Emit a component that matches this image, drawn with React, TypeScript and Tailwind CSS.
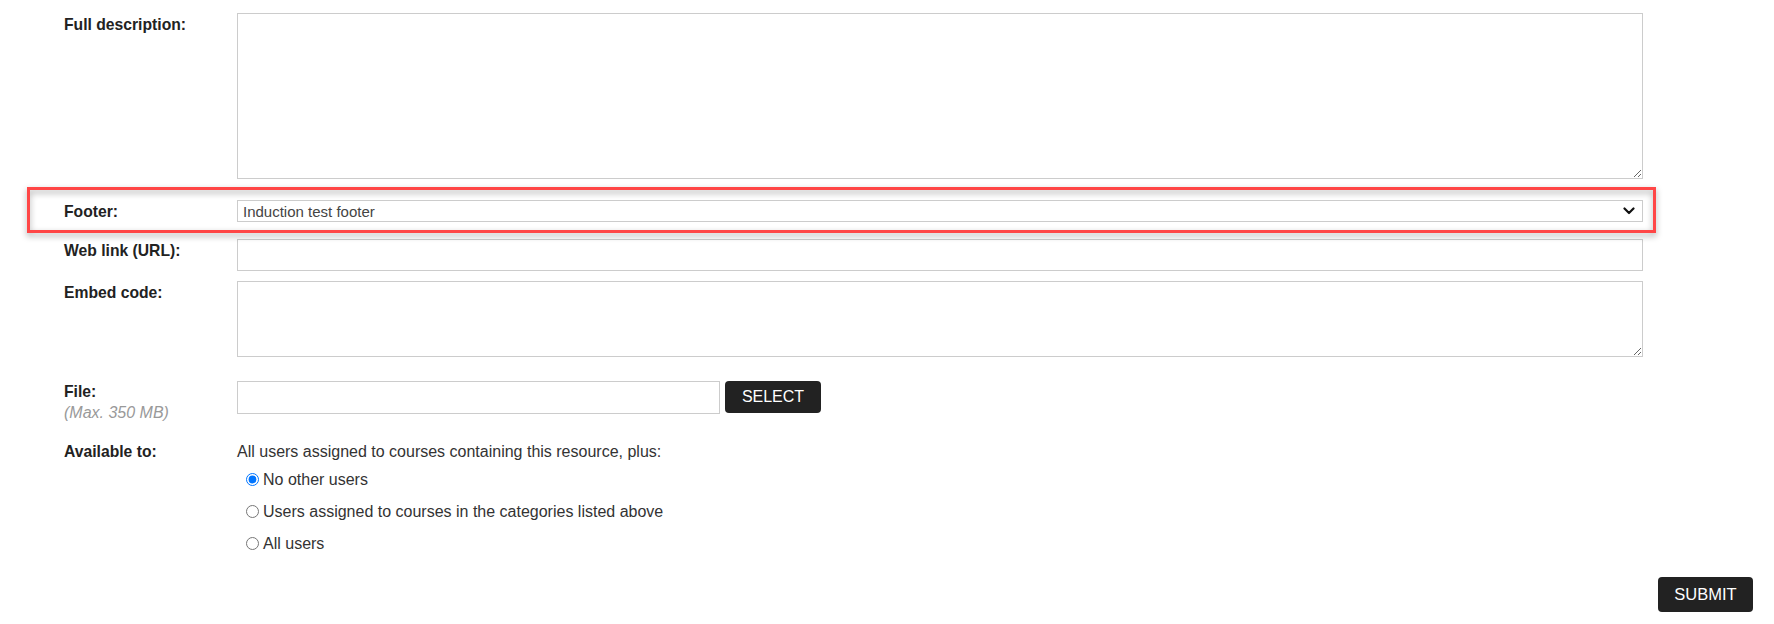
import React from "react";

export default function App() {
  const labelCls = "w-[173px] shrink-0 font-bold text-[15.7px] text-[#222] leading-[21px] pt-[1px]";
  return (
    <div className="min-h-screen bg-white font-['Liberation_Sans',Arial,sans-serif] text-[16px] text-[#333]">
      <div className="pt-[13px] pl-[64px]">
        {/* Full description */}
        <div className="flex items-start">
          <div className={labelCls}>Full description:</div>
          <textarea className="w-[1406px] h-[166px] border border-[#ccc] bg-white outline-none" />
        </div>

        {/* Footer (highlighted) */}
        <div className="relative mt-[8px] -ml-[37px] w-[1629px] h-[46px] pl-[37px] pt-[13px] flex items-start">
          <div className={labelCls}>Footer:</div>
          <div className="relative w-[1406px] h-[22px] border border-[#ccc] bg-white flex items-center pl-[5px] text-[15px] text-[#444] leading-none">
            <span>Induction test footer</span>
            <svg className="absolute right-[7px] top-1/2 -translate-y-1/2" width="12" height="8" viewBox="0 0 12 8">
              <path d="M1.5 1.5 L6 6 L10.5 1.5" fill="none" stroke="#111" strokeWidth="2.2" strokeLinecap="round" strokeLinejoin="round" />
            </svg>
          </div>
          <div className="pointer-events-none absolute inset-0 border-[3px] border-[#ff4646] drop-shadow-[0_3px_3px_rgba(0,0,0,0.35)]" />
        </div>

        {/* Web link */}
        <div className="flex items-start mt-[6px]">
          <div className={labelCls}>Web link (URL):</div>
          <input type="text" className="w-[1406px] h-[32px] border border-[#ccc] bg-white outline-none" />
        </div>

        {/* Embed code */}
        <div className="flex items-start mt-[10px]">
          <div className={labelCls}>Embed code:</div>
          <textarea className="w-[1406px] h-[76px] border border-[#ccc] bg-white outline-none" />
        </div>

        {/* File */}
        <div className="flex items-start mt-[24px]">
          <div className="w-[173px] shrink-0 leading-[21px]">
            <div className="font-bold text-[15.7px] text-[#222]">File:</div>
            <div className="italic text-[#999]">(Max. 350 MB)</div>
          </div>
          <div className="flex items-start">
            <input type="text" className="w-[483px] h-[33px] border border-[#ccc] bg-white outline-none" />
            <button className="ml-[5px] w-[96px] h-[32px] bg-[#222] rounded-[4px] text-white text-[16px] leading-none">
              SELECT
            </button>
          </div>
        </div>

        {/* Available to */}
        <div className="flex items-start mt-[18px]">
          <div className={labelCls + " !pt-0"}>Available to:</div>
          <div className="leading-[21px]">
            <div>All users assigned to courses containing this resource, plus:</div>
            <div className="mt-[1px]">
              {[
                { label: "No other users", checked: true },
                { label: "Users assigned to courses in the categories listed above", checked: false },
                { label: "All users", checked: false },
              ].map((r) => (
                <label key={r.label} className="flex items-center h-[32px] pl-[9px]">
                  <input
                    type="radio"
                    name="avail"
                    defaultChecked={r.checked}
                    className="w-[13px] h-[13px] m-0 accent-[#0075ff]"
                  />
                  <span className="ml-[4px]">{r.label}</span>
                </label>
              ))}
            </div>
          </div>
        </div>
      </div>

      {/* Submit */}
      <div className="flex justify-end pr-[21px] mt-[18px]">
        <button className="w-[95px] h-[35px] bg-[#222] rounded-[4px] text-white text-[16.5px] leading-none">
          SUBMIT
        </button>
      </div>
    </div>
  );
}
